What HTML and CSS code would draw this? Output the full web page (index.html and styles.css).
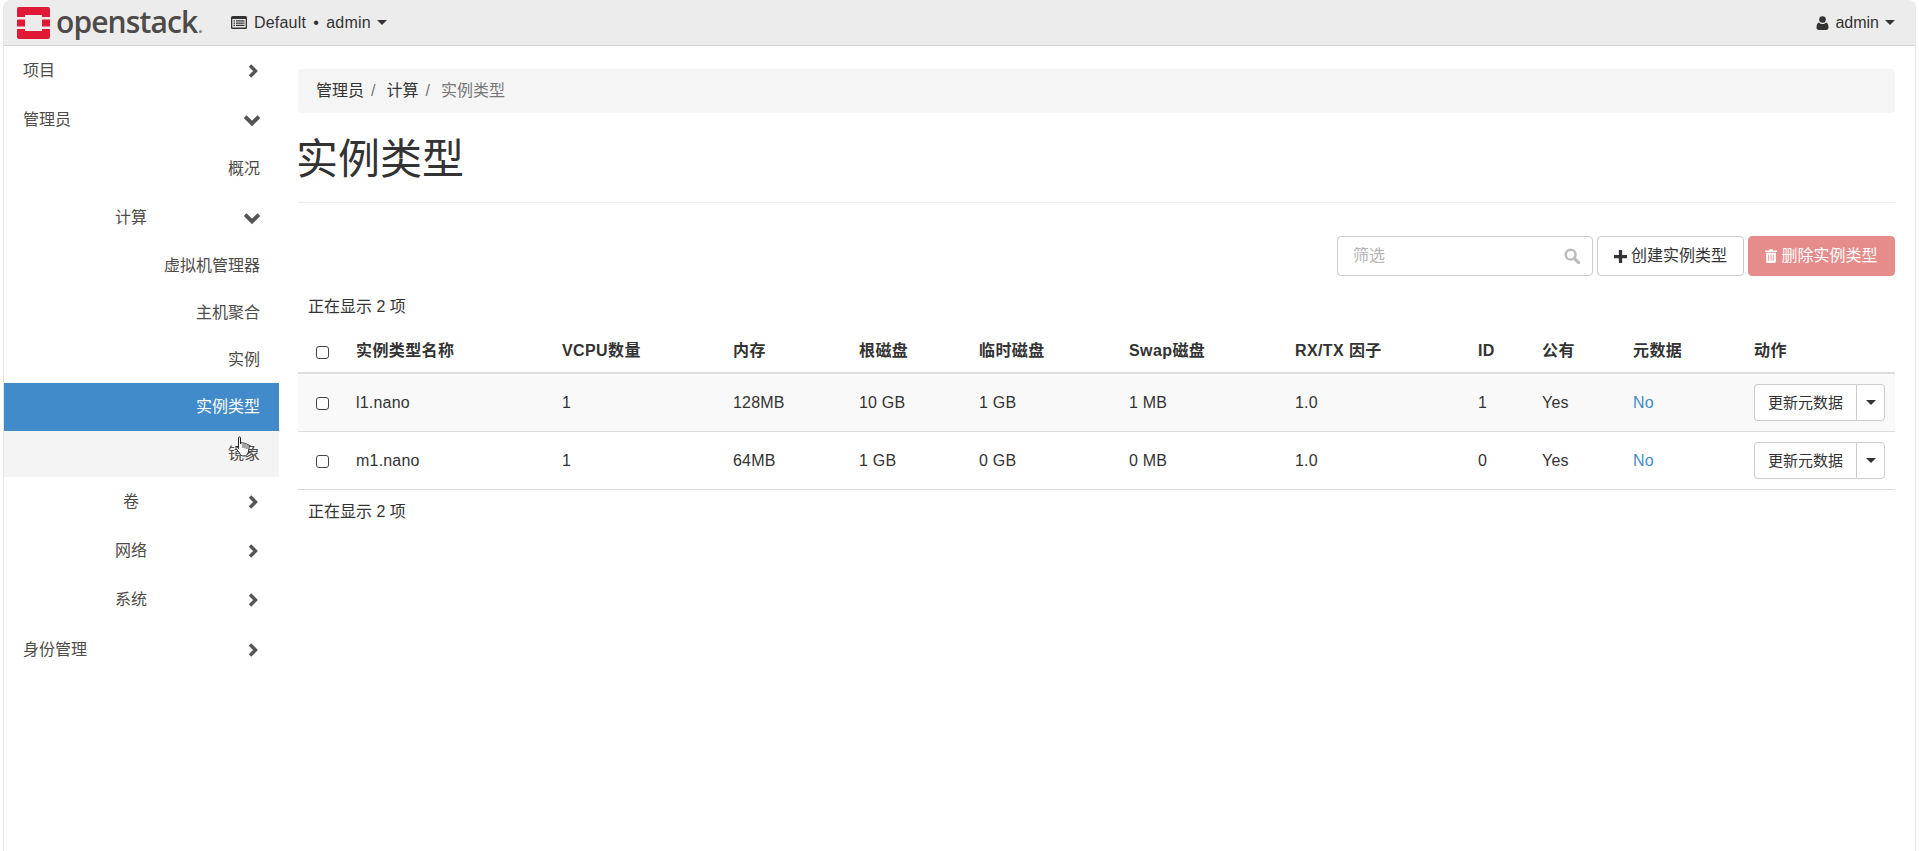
FILE: index.html
```html
<!DOCTYPE html>
<html lang="zh-CN">
<head>
<meta charset="utf-8">
<title>实例类型</title>
<link rel="stylesheet" href="styles.css">
</head>
<body>
<div class="frame">
  <header class="topbar">
    <a class="brand">
      <svg class="logo" viewBox="0 0 33 32" width="33" height="32">
        <path fill="#e01a35" d="M2 0h29a2 2 0 0 1 2 2v8h-8V8H8v2H0V2a2 2 0 0 1 2-2z"/>
        <path fill="#e01a35" d="M0 12.500h8v7H0zM25 12.500h8v7h-8z"/>
        <path fill="#e01a35" d="M0 22h8v2h17v-2h8v8a2 2 0 0 1-2 2H2a2 2 0 0 1-2-2z"/>
      </svg>
      <span class="wordmark">openstack</span>
    </a>
    <div class="context">
      <svg class="ctx-icon" viewBox="0 0 16 13" width="16" height="13">
        <path fill="#333" d="M1.500 0h13A1.500 1.500 0 0 1 16 1.500v10a1.500 1.500 0 0 1-1.500 1.500h-13A1.500 1.500 0 0 1 0 11.500v-10A1.500 1.500 0 0 1 1.500 0zM1.300 3v8.500h13.400V3z"/>
        <path fill="#333" d="M2.500 4.200h1.600v1.200H2.500zM5 4.200h8.500v1.200H5zM2.500 6.500h1.600v1.200H2.500zM5 6.500h8.500v1.200H5zM2.500 8.800h1.600V10H2.500zM5 8.800h8.500V10H5z"/>
      </svg>
      <span class="ctx-label">Default • admin</span><i class="caret"></i>
    </div>
    <div class="user">
      <svg class="user-icon" viewBox="0 0 12 14" width="13" height="14">
        <circle cx="6" cy="3.500" r="3.300" fill="#333"/>
        <path fill="#333" d="M2.500 6.500C3.500 7.600 4.700 8 6 8s2.500-.4 3.500-1.500C11 6.800 12 8.500 12 11.500c0 1.500-1 2.500-2.300 2.500H2.300C1 14 0 13 0 11.500 0 8.500 1 6.800 2.500 6.500z"/>
      </svg>
      <span>admin</span><i class="caret"></i>
    </div>
  </header>
  <div class="layout">
    <nav class="sidebar">
      <a class="nav-item l1"><span>项目</span><svg class="chev" viewBox="0 0 12 14"><path d="M3 1.500 8.500 7 3 12.500" /></svg></a>
      <a class="nav-item l1"><span>管理员</span><svg class="chev down" viewBox="0 0 14 12"><path d="M1 3 7 9 13 3" /></svg></a>
      <a class="nav-item leaf">概况</a>
      <a class="nav-item l2"><span>计算</span><svg class="chev down" viewBox="0 0 14 12"><path d="M1 3 7 9 13 3" /></svg></a>
      <a class="nav-item leaf tight">虚拟机管理器</a>
      <a class="nav-item leaf tight">主机聚合</a>
      <a class="nav-item leaf tight">实例</a>
      <a class="nav-item leaf active">实例类型</a>
      <a class="nav-item leaf hover">镜象</a>
      <a class="nav-item l2 juan"><span>卷</span><svg class="chev" viewBox="0 0 12 14"><path d="M3 1.500 8.500 7 3 12.500" /></svg></a>
      <a class="nav-item l2"><span>网络</span><svg class="chev" viewBox="0 0 12 14"><path d="M3 1.500 8.500 7 3 12.500" /></svg></a>
      <a class="nav-item l2 wide"><span>系统</span><svg class="chev" viewBox="0 0 12 14"><path d="M3 1.500 8.500 7 3 12.500" /></svg></a>
      <a class="nav-item l1"><span>身份管理</span><svg class="chev" viewBox="0 0 12 14"><path d="M3 1.500 8.500 7 3 12.500" /></svg></a>
      <svg class="cursor" viewBox="0 0 16 22" width="16" height="24">
        <path fill="#fff" stroke="#222" stroke-width="1" d="M3.500 1.800c0-1.300 2-1.300 2 0V8l.5-1.200c.8-.4 1.700-.3 2 .4.700-.4 1.600-.3 2 .5.800-.4 1.800-.1 2 .8.500-.2 1.800-.1 2 1 .2 2-.1 5-1 7.500-.5 1.500-1.500 3-4 3-2.500 0-3.500-1-4.500-3L1 12.500c-.6-1.300 1-2.200 2-1l.5 1z"/>
        <path stroke="#222" fill="none" stroke-width=".8" d="M8 7.500V12M10 8v4.500M12 9v4"/>
      </svg>
    </nav>
    <main class="content">
      <ol class="breadcrumb">
        <li class="crumb"><a>管理员</a></li>
        <li class="crumb"><a>计算</a></li>
        <li class="current">实例类型</li>
      </ol>
      <h1 class="page-title">实例类型</h1>
      <div class="toolbar">
        <div class="filter">
          <span class="placeholder">筛选</span>
          <svg class="search" viewBox="0 0 14 14" width="16" height="16">
            <circle cx="5.800" cy="5.800" r="4.300" fill="none" stroke="#bbb" stroke-width="2.200"/>
            <path d="M9 9l3.800 3.800" stroke="#bbb" stroke-width="2.800" stroke-linecap="round"/>
          </svg>
        </div>
        <button class="btn">
          <svg class="btn-icon" viewBox="0 0 12 12" width="13" height="13"><path fill="#333" d="M4.500 0h3v4.500H12v3H7.500V12h-3V7.500H0v-3h4.500z"/></svg>
          创建实例类型
        </button>
        <button class="btn btn-danger">
          <svg class="btn-icon" viewBox="0 0 11 13" width="12" height="14"><path fill="#fff" d="M3.500 1.500 4.200.3h2.600l.7 1.200H11v1.300H0V1.500zM1 3.500h9v8c0 .8-.6 1.500-1.300 1.500H2.300C1.600 13 1 12.300 1 11.500zM3 5v6h.8V5zM5.100 5v6h.8V5zM7.200 5v6H8V5z" fill-rule="evenodd"/></svg>
          删除实例类型
        </button>
      </div>
      <table class="grid">
        <colgroup>
          <col class="c-check"><col class="c-name"><col class="c-vcpu"><col class="c-ram"><col class="c-root"><col class="c-eph"><col class="c-swap"><col class="c-rx"><col class="c-id"><col class="c-pub"><col class="c-meta"><col class="c-act">
        </colgroup>
        <thead>
          <tr class="count-row"><td colspan="12">正在显示 2 项</td></tr>
          <tr class="head-row">
            <th class="check-cell"><i class="check"></i></th>
            <th>实例类型名称</th><th>VCPU数量</th><th>内存</th><th>根磁盘</th><th>临时磁盘</th><th>Swap磁盘</th><th>RX/TX 因子</th><th>ID</th><th>公有</th><th>元数据</th><th>动作</th>
          </tr>
        </thead>
        <tbody>
          <tr class="odd">
            <td class="check-cell"><i class="check"></i></td>
            <td>l1.nano</td><td>1</td><td>128MB</td><td>10 GB</td><td>1 GB</td><td>1 MB</td><td>1.0</td><td>1</td><td>Yes</td><td><a class="link">No</a></td>
            <td class="action-cell"><div class="split"><button class="split-main">更新元数据</button><button class="split-caret"><i class="caret"></i></button></div></td>
          </tr>
          <tr>
            <td class="check-cell"><i class="check"></i></td>
            <td>m1.nano</td><td>1</td><td>64MB</td><td>1 GB</td><td>0 GB</td><td>0 MB</td><td>1.0</td><td>0</td><td>Yes</td><td><a class="link">No</a></td>
            <td class="action-cell"><div class="split"><button class="split-main">更新元数据</button><button class="split-caret"><i class="caret"></i></button></div></td>
          </tr>
        </tbody>
        <tfoot>
          <tr class="count-row"><td colspan="12">正在显示 2 项</td></tr>
        </tfoot>
      </table>
    </main>
  </div>
</div>
</body>
</html>
```

FILE: styles.css
```css
* { box-sizing: border-box; }
html, body { height: 100%; margin: 0; }
body {
  background: #fff;
  color: #333;
  font: 16px/20px "Liberation Sans", "Noto Sans CJK SC", sans-serif;
  overflow: hidden;
}
.frame {
  margin: 0 3px 0 3px;
  height: 851px;
  border-left: 1px solid #e6e6e6;
  border-right: 1px solid #e6e6e6;
  border-radius: 8px 8px 0 0;
  overflow: hidden;
  display: flex;
  flex-direction: column;
}
.topbar {
  flex: none;
  height: 46px;
  background: #ececec;
  border-bottom: 1px solid #d4d4d4;
  display: flex;
  align-items: center;
  padding: 0 20px 0 13px;
}
.brand { display: flex; align-items: center; gap: 6px; width: 214px; flex: none; }
.logo { display: block; flex: none; }
.wordmark {
  font: 600 30px/41px "Open Sans", sans-serif;
  color: #4d4a48;
  letter-spacing: -0.9px;
  margin-bottom: 2px;
  white-space: nowrap;
}
.wordmark::after {
  content: "";
  display: inline-block;
  width: 3px;
  height: 3px;
  margin-left: 2px;
  border-radius: 50%;
  background: #8a8a8a;
}
.context { display: flex; align-items: center; flex: none; }
.ctx-icon { margin-right: 7px; }
.ctx-label { word-spacing: 2.500px; letter-spacing: .2px; }
.user { margin-left: auto; display: flex; align-items: center; }
.user-icon { margin-right: 6px; }
.caret {
  display: inline-block;
  width: 0; height: 0;
  margin-left: 6px;
  border-top: 5px solid #333;
  border-left: 5px solid transparent;
  border-right: 5px solid transparent;
}
.layout { flex: 1; display: flex; min-height: 0; }
.sidebar {
  flex: none;
  width: 275px;
  position: relative;
}
.nav-item {
  display: flex;
  align-items: center;
  height: 49px;
  padding: 0 19px;
  color: #4d4a48;
}
.l1 { justify-content: space-between; padding-left: 19px; }
.l2 { justify-content: space-between; padding-left: 111px; }
.juan { padding-left: 119px; }
.leaf { justify-content: flex-end; padding-right: 19px; }
.tight { height: 47px; }
.wide { height: 50px; }
.active { background: #428bca; color: #fff; height: 48px; }
.hover { background: #f4f4f4; height: 46px; }
.chev { width: 14px; height: 14px; fill: none; stroke: #555; stroke-width: 3.400; }
.chev.down { width: 16px; height: 14px; }
.cursor { position: absolute; left: 231px; top: 389px; }
.content { flex: 1; min-width: 0; padding: 23px 20px 0 19px; }
.breadcrumb {
  list-style: none;
  margin: 0;
  height: 44px;
  padding: 0 18px;
  display: flex;
  align-items: center;
  background: #f5f5f5;
  border-radius: 4px;
  color: #777;
}
.crumb a { color: #333; }
.crumb::after { content: "/"; color: #777; padding: 0 11px 0 7px; }
.page-title {
  margin: 0;
  padding: 23px 0 14px;
  height: 90px;
  font: 400 42px/48px "Liberation Sans", "Noto Sans CJK SC", sans-serif;
  text-indent: -2px;
  color: #333;
  border-bottom: 1px solid #eee;
}
.toolbar {
  display: flex;
  justify-content: flex-end;
  gap: 4px;
  margin-top: 33px;
}
.filter {
  width: 256px;
  height: 40px;
  padding: 0 12px 0 15px;
  border: 1px solid #ccc;
  border-radius: 4px;
  display: flex;
  align-items: center;
  justify-content: space-between;
}
.placeholder { color: #b3b3b3; }
.btn {
  height: 40px;
  width: 147px;
  padding: 0;
  border: 1px solid #ccc;
  border-radius: 4px;
  background: #fff;
  color: #333;
  font: inherit;
  display: flex;
  align-items: center;
  justify-content: center;
  gap: 4px;
}
.btn-danger { background: #e68d8b; border-color: #e68d8b; color: #fff; }
.btn-icon { flex: none; }
.grid {
  width: 100%;
  table-layout: fixed;
  border-collapse: collapse;
  margin-top: 9px;
}
.c-check { width: 50px; }
.c-name { width: 206px; }
.c-vcpu { width: 171px; }
.c-ram { width: 126px; }
.c-root { width: 120px; }
.c-eph { width: 150px; }
.c-swap { width: 166px; }
.c-rx { width: 183px; }
.c-id { width: 64px; }
.c-pub { width: 91px; }
.c-meta { width: 121px; }
.c-act { width: 149px; }
.grid td, .grid th { padding: 9px 8px 7px; text-align: left; }
.grid .count-row td { padding: 12px 10px 10px; height: 42px; }
.head-row th { height: 46px; font-weight: 700; letter-spacing: .4px; border-bottom: 2px solid #ddd; }
tbody td { height: 58px; letter-spacing: .2px; border-bottom: 1px solid #ddd; vertical-align: middle; }
.odd td { background: #f9f9f9; }
.check-cell { line-height: 0; }
.grid th.check-cell { padding: 14px 8px 8px 18px; }
.grid td.check-cell { padding: 10px 8px 8px 18px; }
.grid td.action-cell { padding: 8px; letter-spacing: 0; }
.check {
  display: inline-block;
  width: 13px;
  height: 13px;
  border: 1.500px solid #444;
  border-radius: 3px;
  background: #fff;
}
.link { color: #428bca; }
.split { display: flex; height: 37px; }
.split-main, .split-caret {
  background: #fff;
  border: 1px solid #ccc;
  font: inherit;
  font-size: 15px;
  color: #333;
  padding: 0;
  height: 37px;
}
.split-main { width: 102px; border-radius: 4px 0 0 4px; border-right: 0; padding-top: 2px; }
.split-caret { width: 29px; border-radius: 0 4px 4px 0; display: flex; align-items: center; justify-content: center; }
.split-caret .caret { margin-left: 0; }
```
